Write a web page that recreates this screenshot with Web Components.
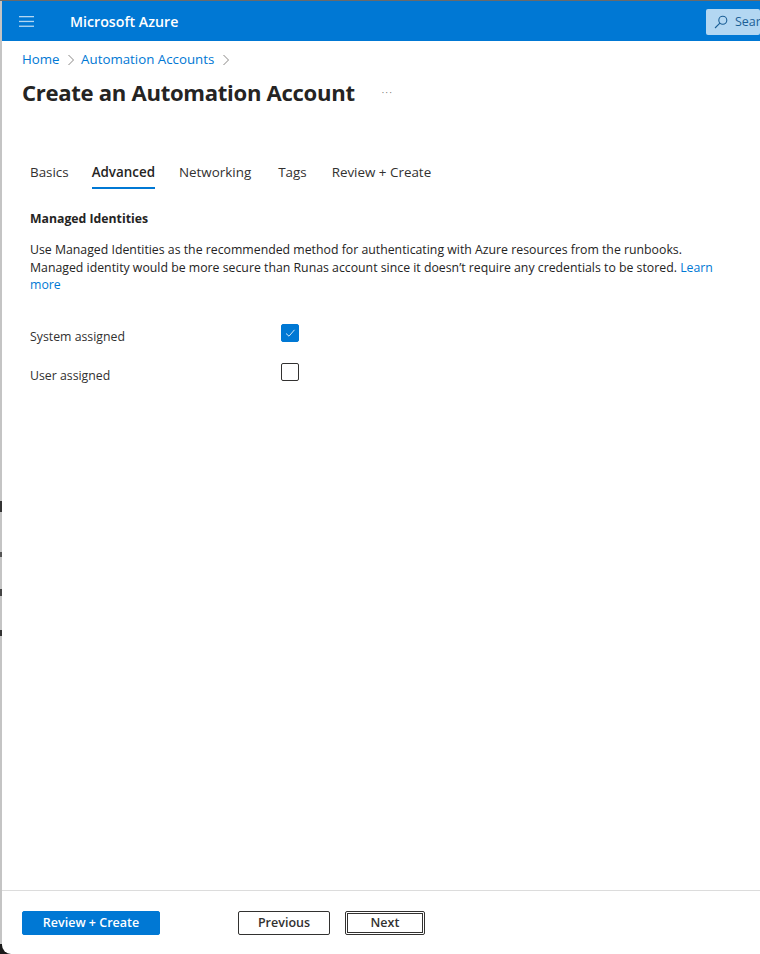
<!DOCTYPE html>
<html lang="en">
<head>
<meta charset="utf-8">
<title>Create an Automation Account</title>
<style>
  html, body { margin: 0; height: 954px; overflow: hidden; }
  body {
    background: #c4c4c4;
    font-family: "Open Sans", "Liberation Sans", sans-serif;
    color: #252423;
  }
  az-blade { height: 954px; }
</style>
</head>
<body>
<az-blade>
  <az-header slot="top">Microsoft Azure</az-header>
  <az-breadcrumb slot="top"></az-breadcrumb>
  <az-title slot="top">Create an Automation Account</az-title>
  <az-tabs slot="top"></az-tabs>
  <az-section slot="top">
    <span slot="heading">Managed Identities</span>
    Use Managed Identities as the recommended method for authenticating with Azure resources from the runbooks.
    Managed identity would be more secure than Runas account since it doesn’t require any credentials to be stored. <a href="#" style="color:#0078d4;text-decoration:none">Learn more</a>
  </az-section>
  <az-check-row slot="top" checked>System assigned</az-check-row>
  <az-check-row slot="top">User assigned</az-check-row>
  <az-footer slot="bottom"></az-footer>
</az-blade>

<script>
class AzBlade extends HTMLElement {
  constructor() {
    super();
    this.attachShadow({ mode: "open" });
    this.shadowRoot.innerHTML = `
      <style>
        :host {
          display: block;
          box-sizing: border-box;
          padding-top: 1px;
          background:
            linear-gradient(#6a6a6a, #6a6a6a) 0 0 / 100% 1px no-repeat,
            linear-gradient(#1a1a1a, #1a1a1a) 0 100% / 14px 10px no-repeat,
            linear-gradient(#333, #333) 0 501px / 2px 11px no-repeat,
            linear-gradient(#555, #555) 0 552px / 2px 5px no-repeat,
            linear-gradient(#444, #444) 0 589px / 2px 7px no-repeat,
            linear-gradient(#333, #333) 0 630px / 2px 6px no-repeat,
            #c4c4c4;
        }
        .window {
          height: 100%;
          margin-left: 2px;
          background: #fff;
          display: flex;
          flex-direction: column;
          border-bottom-left-radius: 9px;
        }
        .top { flex: 1; }
      </style>
      <div class="window">
        <div class="top"><slot name="top"></slot></div>
        <slot name="bottom"></slot>
      </div>
    `;
  }
}

class AzHeader extends HTMLElement {
  constructor() {
    super();
    this.attachShadow({ mode: "open" });
    this.shadowRoot.innerHTML = `
      <style>
        :host {
          display: flex;
          align-items: center;
          height: 40px;
          background: #0078d4;
          color: #fff;
          overflow: hidden;
        }
        .menu { width: 15px; height: 11px; margin-left: 17px; flex: none; }
        .brand { margin-left: 36px; font-size: 14.2px; font-weight: 600; flex: 1; white-space: nowrap; }
        .search {
          flex: none;
          width: 54px;
          height: 26px;
          margin-top: 1px;
          box-sizing: border-box;
          background: #b3d7f2;
          border-radius: 2px;
          display: flex;
          align-items: center;
          gap: 7px;
          padding-left: 8px;
          color: #1b5f96;
          font-size: 12.5px;
          overflow: hidden;
          white-space: nowrap;
        }
        .search svg { width: 14px; height: 14px; flex: none; }
      </style>
      <svg class="menu" viewBox="0 0 15 11" fill="#b3d7f2">
        <rect y="0" width="15" height="1.3"/><rect y="4.8" width="15" height="1.3"/><rect y="9.6" width="15" height="1.3"/>
      </svg>
      <span class="brand"><slot></slot></span>
      <div class="search">
        <svg viewBox="0 0 14 14" fill="none" stroke="#1b5f96" stroke-width="1.1">
          <circle cx="8.8" cy="5.2" r="4"/><path d="M5.9 8.1 L1 13"/>
        </svg>
        <span>Search</span>
      </div>
    `;
  }
}

class AzBreadcrumb extends HTMLElement {
  constructor() {
    super();
    this.attachShadow({ mode: "open" });
    const chevron = `<svg viewBox="0 0 8 12" fill="none" stroke="#8a8886" stroke-width="1"><path d="M1.5 1 L6.5 6 L1.5 11"/></svg>`;
    this.shadowRoot.innerHTML = `
      <style>
        :host {
          display: flex;
          align-items: center;
          height: 18px;
          margin: 9px 0 0 20px;
          font-size: 13.3px;
          color: #0078d4;
        }
        svg { width: 8px; height: 12px; margin: 1px 6px 0 7.5px; }
      </style>
      <span>Home</span>${chevron}<span>Automation Accounts</span>${chevron}
    `;
  }
}

class AzTitle extends HTMLElement {
  constructor() {
    super();
    this.attachShadow({ mode: "open" });
    this.shadowRoot.innerHTML = `
      <style>
        :host {
          display: flex;
          align-items: center;
          height: 34px;
          margin: 7px 0 0 20px;
          font-size: 22.1px;
          font-weight: 700;
          color: #252423;
          letter-spacing: -0.3px;
        }
        .more { margin-left: 27px; font-size: 9px; font-weight: 400; letter-spacing: 1.5px; color: #605e5c; }
      </style>
      <span><slot></slot></span>
      <span class="more">···</span>
    `;
  }
}

class AzTabs extends HTMLElement {
  constructor() {
    super();
    this.attachShadow({ mode: "open" });
    // gaps differ a little from tab to tab in the portal
    const tabs = [["Basics", 23], ["Advanced", 24], ["Networking", 27], ["Tags", 25], ["Review + Create", 0]];
    this.shadowRoot.innerHTML = `
      <style>
        :host {
          display: flex;
          margin: 51px 0 0 28px;
          font-size: 13.4px;
          color: #323130;
        }
        .tab { height: 29px; padding-top: 3px; box-sizing: border-box; line-height: 18px; }
        .on { font-weight: 600; color: #252423; border-bottom: 2px solid #0078d4; }
      </style>
      ${tabs.map(([t, gap]) => `<div class="tab ${t === "Advanced" ? "on" : ""}" style="margin-right:${gap}px">${t}</div>`).join("")}
    `;
  }
}

class AzSection extends HTMLElement {
  constructor() {
    super();
    this.attachShadow({ mode: "open" });
    this.shadowRoot.innerHTML = `
      <style>
        :host {
          display: block;
          margin: 21px 28px 0 28px;
          width: 690px;
          font-size: 12.3px;
          line-height: 17.5px;
          color: #252423;
        }
        h2 { margin: 0 0 13px; font-size: 12.25px; line-height: 18px; font-weight: 700; }
        .body { margin-bottom: 20px; }
      </style>
      <h2><slot name="heading"></slot></h2>
      <div class="body"><slot></slot></div>
    `;
  }
}

class AzCheckRow extends HTMLElement {
  constructor() {
    super();
    this.attachShadow({ mode: "open" });
    const checked = this.hasAttribute("checked");
    this.shadowRoot.innerHTML = `
      <style>
        :host {
          display: flex;
          align-items: center;
          height: 39px;
          margin-left: 28px;
          font-size: 12.3px;
          color: #323130;
        }
        .label { width: 251px; padding-top: 6px; }
        .box {
          width: 18px;
          height: 18px;
          box-sizing: border-box;
          border-radius: 2px;
          border: 1px solid ${checked ? "#0078d4" : "#323130"};
          background: ${checked ? "#0078d4" : "#fff"};
          display: flex;
          align-items: center;
          justify-content: center;
        }
        svg { width: 12px; height: 12px; }
      </style>
      <span class="label"><slot></slot></span>
      <span class="box">
        ${checked ? `<svg viewBox="0 0 12 12" fill="none" stroke="#cfe6f8" stroke-width="1"><path d="M2 6.5 L5 9.2 L10.5 2.8"/></svg>` : ""}
      </span>
    `;
  }
}

class AzFooter extends HTMLElement {
  constructor() {
    super();
    this.attachShadow({ mode: "open" });
    this.shadowRoot.innerHTML = `
      <style>
        :host {
          display: flex;
          align-items: flex-start;
          height: 64px;
          box-sizing: border-box;
          border-top: 1px solid #dcdcdc;
          padding: 20px 0 0 20px;
          font-size: 12.5px;
          font-weight: 600;
        }
        button {
          font: inherit;
          height: 24px;
          padding: 0 0 2px;
          box-sizing: border-box;
          border-radius: 2px;
          background: #fff;
          color: #323130;
          border: 1px solid #323130;
        }
        .primary { width: 138px; background: #0078d4; border-color: #0078d4; color: #fff; margin-right: 78px; }
        .prev { width: 92px; margin-right: 15px; }
        .next { width: 80px; outline: 1px solid #323130; outline-offset: -3px; }
      </style>
      <button class="primary">Review + Create</button>
      <button class="prev">Previous</button>
      <button class="next">Next</button>
    `;
  }
}

customElements.define("az-blade", AzBlade);
customElements.define("az-header", AzHeader);
customElements.define("az-breadcrumb", AzBreadcrumb);
customElements.define("az-title", AzTitle);
customElements.define("az-tabs", AzTabs);
customElements.define("az-section", AzSection);
customElements.define("az-check-row", AzCheckRow);
customElements.define("az-footer", AzFooter);
</script>
</body>
</html>
